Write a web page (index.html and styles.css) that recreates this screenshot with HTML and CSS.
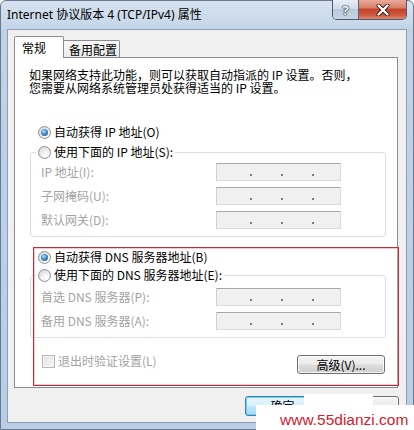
FILE: index.html
```html
<!DOCTYPE html>
<html lang="zh-CN">
<head>
<meta charset="utf-8">
<title>Internet 协议版本 4 (TCP/IPv4) 属性</title>
<link rel="stylesheet" href="styles.css">
</head>
<body>
<div class="window">
  <div class="titlebar">
    <span class="title">Internet 协议版本 4 (TCP/IPv4) 属性</span>
    <div class="caption">
      <span class="cbtn help">?</span>
      <span class="cbtn close">
        <svg width="14" height="12" viewBox="0 0 14 12"><path d="M2.5 1.5 L11.5 10.5 M11.5 1.5 L2.5 10.5" stroke="#3a1a14" stroke-width="4" stroke-linecap="round"/><path d="M2.5 1.5 L11.5 10.5 M11.5 1.5 L2.5 10.5" stroke="#ffffff" stroke-width="2.4" stroke-linecap="round"/></svg>
      </span>
    </div>
  </div>
  <div class="client">
    <div class="tabs">
      <div class="tab active">常规</div>
      <div class="tab">备用配置</div>
    </div>
    <div class="panel">
      <p class="intro">如果网络支持此功能，则可以获取自动指派的 IP 设置。否则，<br>您需要从网络系统管理员处获得适当的 IP 设置。</p>
      <div class="radio-row r1"><span class="radio checked"></span><span>自动获得 IP 地址(O)</span></div>
      <fieldset class="group g1">
        <legend><span class="radio"></span><span>使用下面的 IP 地址(S):</span></legend>
        <div class="frow"><span class="lbl">IP 地址(I):</span><span class="ipbox"><i></i><i></i><i></i></span></div>
        <div class="frow"><span class="lbl">子网掩码(U):</span><span class="ipbox"><i></i><i></i><i></i></span></div>
        <div class="frow"><span class="lbl">默认网关(D):</span><span class="ipbox"><i></i><i></i><i></i></span></div>
      </fieldset>
      <div class="radio-row r3"><span class="radio checked"></span><span>自动获得 DNS 服务器地址(B)</span></div>
      <fieldset class="group g2">
        <legend><span class="radio"></span><span>使用下面的 DNS 服务器地址(E):</span></legend>
        <div class="frow"><span class="lbl">首选 DNS 服务器(P):</span><span class="ipbox"><i></i><i></i><i></i></span></div>
        <div class="frow"><span class="lbl">备用 DNS 服务器(A):</span><span class="ipbox"><i></i><i></i><i></i></span></div>
      </fieldset>
      <div class="bottom-row">
        <span class="check"><span class="box"></span><span>退出时验证设置(L)</span></span>
        <span class="btn adv">高级(V)...</span>
      </div>
    </div>
    <div class="dlg-buttons">
      <span class="btn default">确定</span>
      <span class="btn">取消</span>
    </div>
  </div>
</div>
<div class="annot"></div>
<div class="wm-a"></div>
<div class="wm-b">www.55dianzi.com</div>
</body>
</html>
```
FILE: styles.css
```css
* { box-sizing: border-box; }
html, body { margin: 0; padding: 0; }
body {
  position: relative;
  width: 414px;
  height: 430px;
  overflow: hidden;
  background: #fff;
  font-family: "Noto Sans CJK SC", "Noto Sans", sans-serif;
  font-size: 12px;
  color: #000;
}

.window {
  width: 414px;
  height: 430px;
  display: flex;
  flex-direction: column;
  padding: 0 6px 6px 6px;
  border: 1px solid #6a7a8e;
  border-radius: 6px 6px 0 0;
  background: linear-gradient(180deg, #d6e2ef 0, #cadaeb 20px, #bfd2e8 29px, #b9cde5 100%);
}

.titlebar {
  height: 28px;
  display: flex;
  align-items: flex-start;
}
.title {
  font-family: "Noto Sans", "Noto Sans CJK SC", sans-serif;
  font-size: 12px;
  line-height: 16px;
  margin-top: 6px;
  color: #000;
}
.caption {
  margin-left: auto;
  margin-top: -1px;
  display: flex;
  height: 20px;
  border: 1px solid #4e5a6a;
  border-top: none;
  border-radius: 0 0 5px 5px;
  overflow: hidden;
}
.cbtn {
  display: flex;
  align-items: center;
  justify-content: center;
}
.help {
  width: 26px;
  border-right: 1px solid #5a6676;
  background: linear-gradient(180deg, #e6edf5 0, #d2dde9 45%, #b9c8da 50%, #c7d6e7 100%);
  font-family: "Noto Sans", sans-serif;
  font-weight: bold;
  font-size: 13px;
  color: #eef2f6;
  text-shadow: 0 0 1px #2e3a48, 0 0 1px #2e3a48, 0 0 2px #2e3a48;
}
.close {
  width: 47px;
  background: linear-gradient(180deg, #eaa999 0, #d9816c 40%, #c4432a 50%, #cf5a3f 80%, #e08a70 100%);
}

.client {
  flex: 1;
  display: flex;
  flex-direction: column;
  background: #f0f0f0;
  border: 1px solid #8e9eb2;
  padding: 6px 0 0 6px;
}

.tabs {
  display: flex;
  align-items: flex-end;
  height: 22px;
  margin-bottom: -1px;
  position: relative;
  z-index: 1;
}
.tab {
  border: 1px solid #898c95;
  border-bottom: none;
  line-height: 14px;
}
.tab.active {
  width: 50px;
  height: 22px;
  padding: 4px 0 0 7px;
  background: #fff;
  border-radius: 2px 2px 0 0;
}
.tab:not(.active) {
  width: 56px;
  height: 17px;
  margin-bottom: 1px;
  padding: 2px 0 0 5px;
  border-left: none;
  background: linear-gradient(180deg, #f8f8f8 0, #ececec 100%);
  border-radius: 0 2px 0 0;
}

.panel {
  width: 384px;
  height: 331px;
  background: #fff;
  border: 1px solid #898c95;
  display: flex;
  flex-direction: column;
}
.intro {
  margin: 10px 0 0 14px;
  line-height: 13px;
}

.radio-row {
  display: flex;
  align-items: center;
  gap: 3px;
  height: 16px;
  line-height: 16px;
  padding-left: 23px;
}
.r1 { margin-top: 30px; }
.r3 { margin-top: 12px; }

.radio {
  flex: none;
  width: 13px;
  height: 13px;
  border-radius: 50%;
  border: 1px solid #8c9196;
  background: radial-gradient(circle at 65% 70%, #ffffff 0, #f2f2f2 35%, #d0d0d0 100%);
  display: flex;
  align-items: center;
  justify-content: center;
}
.radio.checked::after {
  content: "";
  width: 7px;
  height: 7px;
  border-radius: 50%;
  background: radial-gradient(circle at 40% 35%, #bfe3fb 0, #4a92d0 40%, #174a7c 100%);
}

.group {
  margin: 0 0 0 15px;
  width: 356px;
  padding: 0;
  min-width: 0;
  border: 1px solid #d5dfe5;
  border-radius: 3px;
}
.g1 { margin-top: 4px; padding: 3px 0 7px 0; }
.g2 { margin-top: 2px; padding: 5px 0 7px 0; }
.group legend {
  margin-left: 5px;
  padding: 0 2px 0 2px;
  height: 16px;
  line-height: 16px;
  display: flex;
  align-items: center;
  gap: 3px;
}
.frow {
  display: flex;
  align-items: center;
  height: 18px;
  padding-left: 10px;
}
.frow + .frow { margin-top: 6px; }
.lbl {
  width: 175px;
  color: #a3a3a3;
  line-height: 16px;
}
.ipbox {
  width: 125px;
  height: 18px;
  display: flex;
  align-items: flex-end;
  gap: 29px;
  padding: 0 0 4px 33px;
  background: #f0f0f0;
  border: 1px solid #dadada;
  border-top-color: #a9a9a9;
  border-left-color: #cfcfcf;
}
.ipbox i {
  width: 2px;
  height: 2px;
  background: #7a7a7a;
}

.bottom-row {
  margin-top: 16px;
  display: flex;
  justify-content: space-between;
  align-items: flex-start;
  padding: 0 12px 0 27px;
}
.check {
  display: flex;
  align-items: center;
  gap: 3px;
  line-height: 14px;
  color: #a3a3a3;
}
.box {
  width: 13px;
  height: 13px;
  border: 1px solid #b8b8b8;
  background: linear-gradient(135deg, #e4e4e4, #f6f6f6);
  box-shadow: inset 0 0 0 1px #f4f4f4;
}

.btn {
  display: flex;
  align-items: center;
  justify-content: center;
  width: 75px;
  height: 20px;
  border: 1px solid #707070;
  border-radius: 3px;
  background: linear-gradient(180deg, #f4f4f4 0, #ebebeb 48%, #dddddd 52%, #cfcfcf 100%);
  box-shadow: inset 0 0 0 1px rgba(255, 255, 255, 0.75);
  line-height: 16px;
  color: #000;
}
.btn.adv {
  width: 88px;
  height: 19px;
  margin-top: 1px;
}
.dlg-buttons {
  margin-top: 8px;
  display: flex;
  justify-content: flex-end;
  gap: 4px;
  padding-right: 7px;
}
.btn.default {
  border-color: #3c7fb1;
  background: linear-gradient(180deg, #eaf6fd 0, #d9f0fc 48%, #bee6fd 52%, #a7d9f5 100%);
  box-shadow: inset 0 0 0 1px #6fd0f5;
}

.annot {
  position: absolute;
  left: 33px;
  top: 247px;
  width: 366px;
  height: 139px;
  border: 1px solid #c0303a;
  box-shadow: inset 0 0 0 1px rgba(238, 165, 172, 0.6);
  pointer-events: none;
}
.wm-a {
  position: absolute;
  left: 304px;
  top: 394px;
  width: 69px;
  height: 11px;
  background: #fff;
}
.wm-b {
  position: absolute;
  left: 256px;
  top: 405px;
  width: 158px;
  height: 25px;
  background: #fff;
  padding: 6px 0 0 24px;
  font-family: "Liberation Sans", Arial, sans-serif;
  font-size: 15.5px;
  line-height: 18px;
  color: #d3202c;
  white-space: nowrap;
}
```
